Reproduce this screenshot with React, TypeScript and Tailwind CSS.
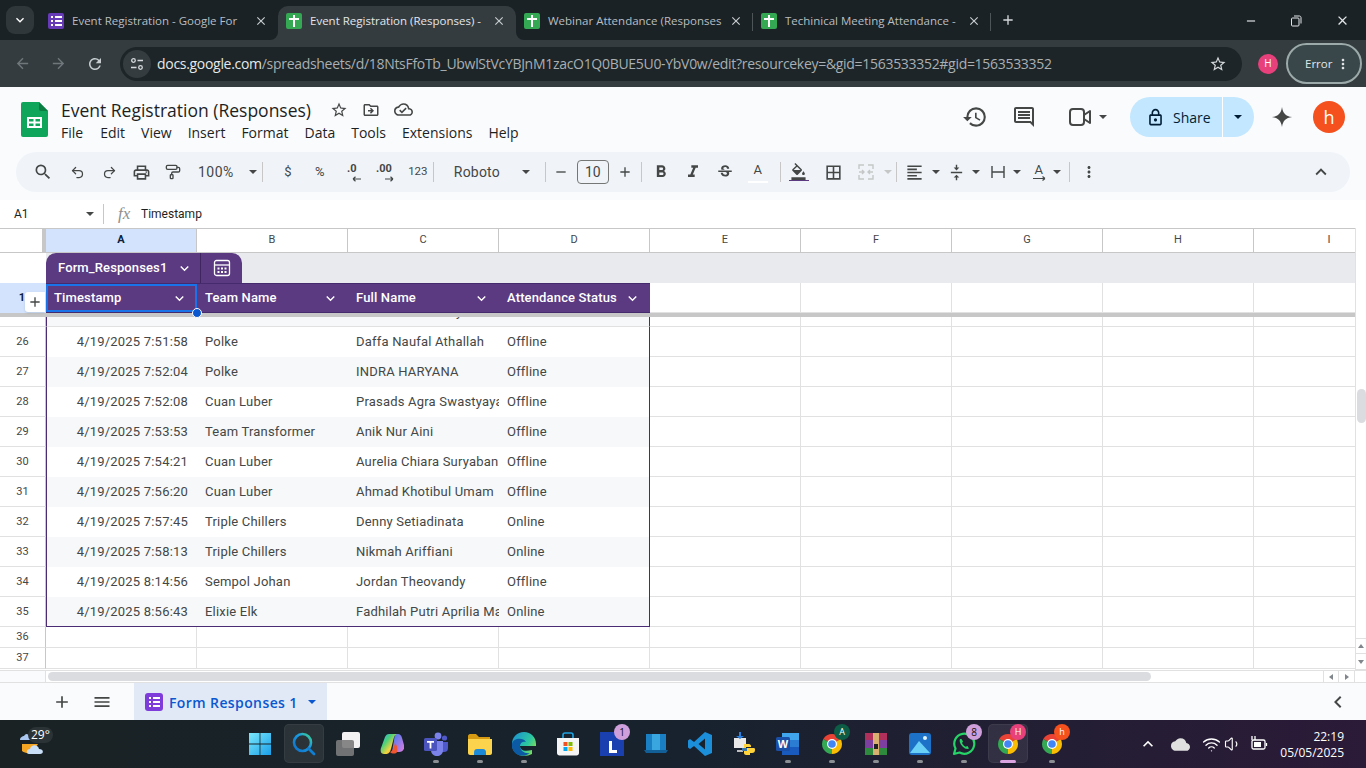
import type { ReactNode } from "react";
import { PaintRoller, Redo2, Undo2, Volume1, Wifi } from "lucide-react";
import {
  MdArrowBack,
  MdArrowForward,
  MdBorderAll,
  MdClose,
  MdExpandLess,
  MdExpandMore,
  MdFormatAlignLeft,
  MdFormatBold,
  MdFormatColorFill,
  MdFormatItalic,
  MdHistory,
  MdKeyboardArrowUp,
  MdMenu,
  MdMoreVert,
  MdOutlineCloudDone,
  MdOutlineDriveFileMove,
  MdOutlineInsertComment,
  MdOutlineLock,
  MdOutlinePrint,
  MdRefresh,
  MdSearch,
  MdStarBorder,
  MdStrikethroughS,
  MdAdd,
  MdRemove,
  MdVerticalAlignCenter,
  MdChevronLeft,
  MdCloud,
} from "react-icons/md";

const rows = [
  ["26", "4/19/2025 7:51:58", "Polke", "Daffa Naufal Athallah", "Offline"],
  ["27", "4/19/2025 7:52:04", "Polke", "INDRA HARYANA", "Offline"],
  ["28", "4/19/2025 7:52:08", "Cuan Luber", "Prasads Agra Swastyaya", "Offline"],
  ["29", "4/19/2025 7:53:53", "Team Transformer", "Anik Nur Aini", "Offline"],
  ["30", "4/19/2025 7:54:21", "Cuan Luber", "Aurelia Chiara Suryaban", "Offline"],
  ["31", "4/19/2025 7:56:20", "Cuan Luber", "Ahmad Khotibul Umam", "Offline"],
  ["32", "4/19/2025 7:57:45", "Triple Chillers", "Denny Setiadinata", "Online"],
  ["33", "4/19/2025 7:58:13", "Triple Chillers", "Nikmah Ariffiani", "Online"],
  ["34", "4/19/2025 8:14:56", "Sempol Johan", "Jordan Theovandy", "Offline"],
  ["35", "4/19/2025 8:56:43", "Elixie Elk", "Fadhilah Putri Aprilia Ma", "Online"],
];

const emptyCols = ["E", "F", "G", "H", "I"];

function SheetTabIcon() {
  return (
    <span className="relative block h-4 w-4 shrink-0 rounded-[2px] bg-[#34a853]">
      <span className="absolute left-[3px] top-[5px] h-[2px] w-[10px] bg-white" />
      <span className="absolute left-[7px] top-[2px] h-[12px] w-[2px] bg-white" />
    </span>
  );
}

function FormsIcon({ size, bg }: { size: string; bg: string }) {
  return (
    <span className={`flex shrink-0 flex-col items-center justify-center gap-[2px] ${size} ${bg}`}>
      {[0, 1, 2].map((i) => (
        <span key={i} className="flex items-center gap-[2px]">
          <span className="h-[2px] w-[2px] bg-white" />
          <span className="h-[2px] w-[7px] bg-white" />
        </span>
      ))}
    </span>
  );
}

function Tab({ icon, title, active, width, sep }: { icon: ReactNode; title: string; active?: boolean; width: string; sep?: boolean }) {
  return (
    <div className={`relative flex h-[34px] shrink-0 items-center pb-[6px] pl-2 pr-[10px] pt-[1px] ${width} ${active ? "rounded-t-[10px] bg-[#343c40] text-[#e3e6e8]" : "text-[#b9bec1]"}`}>
      {active && (
        <>
          <span className="absolute -left-2 bottom-0 h-2 w-2 bg-[#343c40]">
            <span className="block h-2 w-2 rounded-br-[8px] bg-[#1a2226]" />
          </span>
          <span className="absolute -right-2 bottom-0 h-2 w-2 bg-[#343c40]">
            <span className="block h-2 w-2 rounded-bl-[8px] bg-[#1a2226]" />
          </span>
        </>
      )}
      {icon}
      <span className="ml-2 min-w-0 flex-1 whitespace-nowrap text-[11.5px]">{title}</span>
      <MdClose className="ml-2 shrink-0 text-[#c8cdd0]" size={14} />
      {sep && <span className="absolute right-0 top-[7px] h-[18px] w-px bg-[#4d5558]" />}
    </div>
  );
}

function ChromeBar() {
  return (
    <div className="bg-[#1a2226] font-['Open_Sans',sans-serif]">
      <div className="flex h-10 items-end">
        <div className="mb-[6px] ml-[6px] mr-[6px] flex h-7 w-7 shrink-0 items-center justify-center rounded-[9px] bg-[#2f373a] text-white">
          <MdExpandMore size={16} />
        </div>
        <Tab icon={<FormsIcon size="h-4 w-4 rounded-[2px]" bg="bg-[#673ab7]" />} title="Event Registration - Google For" width="w-[238px]" />
        <Tab icon={<SheetTabIcon />} title="Event Registration (Responses) -" active width="w-[238px]" />
        <Tab icon={<SheetTabIcon />} title="Webinar Attendance (Responses" width="w-[237px]" sep />
        <Tab icon={<SheetTabIcon />} title="Techinical Meeting Attendance -" width="w-[238px]" sep />
        <MdAdd className="mb-[12px] ml-[9px] text-[#d5d9db]" size={16} />
        <div className="mb-3 ml-auto flex items-center text-[#e3e6e8]">
          <MdRemove className="mr-[32px]" size={14} />
          <svg width="12" height="12" viewBox="0 0 12 12" fill="none" stroke="#e3e6e8" className="mr-[33px]">
            <rect x="1.5" y="3" width="7.5" height="8" rx="1" />
            <path d="M4 1H9.5C10.3 1 11 1.7 11 2.5V8.5" />
          </svg>
          <MdClose className="mr-[16px]" size={15} />
        </div>
      </div>
      <div className="flex h-[47px] items-center bg-[#343c40] pl-[14px] pr-1">
        <MdArrowBack className="text-[#6f777b]" size={17} />
        <MdArrowForward className="ml-[19px] text-[#6f777b]" size={17} />
        <MdRefresh className="ml-[19px] text-[#c8cdd0]" size={18} />
        <div className="ml-[16px] flex h-[34px] w-[1122px] items-center rounded-full bg-[#1d2528] pl-[3px]">
          <span className="flex h-7 w-7 items-center justify-center rounded-full bg-[#343c40]">
            <svg width="14" height="14" viewBox="0 0 14 14" fill="none" stroke="#d5d9db" strokeWidth="1.3">
              <circle cx="3.5" cy="3.5" r="1.8" />
              <path d="M7.5 3.5H13M1 10.5H6.5" />
              <circle cx="10.5" cy="10.5" r="1.8" />
            </svg>
          </span>
          <span className="ml-[6px] whitespace-nowrap text-[14px] tracking-[-0.3px] text-[#a9afb2]">
            <span className="text-[#e6e9ea]">docs.google.com</span>/spreadsheets/d/18NtsFfoTb_UbwlStVcYBJnM1zacO1Q0BUE5U0-YbV0w/edit?resourcekey=&amp;gid=1563533352#gid=1563533352
          </span>
          <MdStarBorder className="ml-auto mr-[15px] text-[#d5d9db]" size={18} />
        </div>
        <span className="ml-4 flex h-5 w-5 items-center justify-center rounded-full bg-[#e8407a] text-[10px] text-white">H</span>
        <div className="ml-2 flex h-[41px] w-[76px] items-center rounded-full border-2 border-[#9caaa9] bg-[#39474a] pl-[17px] text-[11.5px] text-[#e3e6e8]">
          Error
          <MdMoreVert className="ml-[3px]" size={16} />
        </div>
      </div>
    </div>
  );
}

function SheetsLogo() {
  return (
    <svg width="27" height="35" viewBox="0 0 27 35" className="shrink-0">
      <path d="M2 0H18L27 9V33a2 2 0 0 1-2 2H2a2 2 0 0 1-2-2V2a2 2 0 0 1 2-2z" fill="#0fa55a" />
      <path d="M18 0L27 9H20a2 2 0 0 1-2-2z" fill="#0a7d43" />
      <path d="M6 15H21V26H6z M8 17V19.5H12.5V17z M14.5 17V19.5H19V17z M8 21.5V24H12.5V21.5z M14.5 21.5V24H19V21.5z" fill="#fff" fillRule="evenodd" />
    </svg>
  );
}

function AppHeader() {
  const menus = ["File", "Edit", "View", "Insert", "Format", "Data", "Tools", "Extensions", "Help"];
  return (
    <div className="flex h-[65px] items-center bg-[#f9fbfd] pl-[21px] font-['Open_Sans',sans-serif] text-[#1f1f1f]">
      <SheetsLogo />
      <div className="ml-[13px]">
        <div className="flex h-[24px] items-center pt-[1px]">
          <span className="whitespace-nowrap text-[17.5px] leading-6">Event Registration (Responses)</span>
          <MdStarBorder className="ml-[19px] text-[#444746]" size={18} />
          <MdOutlineDriveFileMove className="ml-[14px] text-[#444746]" size={18} />
          <MdOutlineCloudDone className="ml-[14px] text-[#444746]" size={19} />
        </div>
        <div className="mt-[1px] flex h-[20px] items-center gap-[16px] text-[14px]">
          {menus.map((m, i) => (
            <span key={m} className={i === 0 ? "mr-[1px]" : ""}>{m}</span>
          ))}
        </div>
      </div>
      <div className="ml-auto flex items-center pb-[5px] text-[#444746]">
        <MdHistory size={26} />
        <MdOutlineInsertComment className="ml-[24px]" size={24} />
        <svg width="22" height="20" viewBox="0 0 22 20" fill="none" stroke="#444746" strokeWidth="2" className="ml-[33px]">
          <rect x="1" y="2" width="14" height="16" rx="3" />
          <path d="M15 8L21 4V16L15 12" strokeLinejoin="round" />
        </svg>
        <span className="ml-[8px] h-0 w-0 border-x-[4px] border-t-[4px] border-x-transparent border-t-[#444746]" />
        <div className="ml-[23px] flex h-10 w-[124px] items-center rounded-full bg-[#c2e7ff] text-[#001d35]">
          <MdOutlineLock className="ml-[16px]" size={19} />
          <span className="ml-[8px] text-[14px] font-medium">Share</span>
          <span className="ml-[11px] h-10 w-px bg-white" />
          <span className="ml-[11px] h-0 w-0 border-x-[4px] border-t-[4px] border-x-transparent border-t-[#001d35]" />
        </div>
        <svg width="22" height="22" viewBox="0 0 24 24" className="ml-[17px]">
          <path d="M12 1C13 8 16 11 23 12C16 13 13 16 12 23C11 16 8 13 1 12C8 11 11 8 12 1Z" fill="#444746" />
        </svg>
        <span className="ml-[20px] mr-[21px] flex h-8 w-8 items-center justify-center rounded-full bg-[#f4511e] text-[18px] text-white">h</span>
      </div>
    </div>
  );
}

function Caret({ className = "" }: { className?: string }) {
  return <span className={`h-0 w-0 shrink-0 border-x-[4px] border-t-[4px] border-x-transparent border-t-[#444746] ${className}`} />;
}

function Sep({ ml, mr }: { ml: string; mr: string }) {
  return <span className={`h-[20px] w-px shrink-0 bg-[#c7c7c7] ${ml} ${mr}`} />;
}

function Tool({ children }: { children: ReactNode }) {
  return <span className="flex h-7 w-8 shrink-0 items-center justify-center text-[#444746]">{children}</span>;
}

function Toolbar() {
  return (
    <div className="bg-[#f9fbfd] pb-2 pl-4 pr-4 font-['Roboto',sans-serif] text-[#444746]">
      <div className="flex h-10 items-center rounded-full bg-[#f0f4f9] pl-[11px]">
        <Tool><MdSearch size={20} /></Tool>
        <span className="w-[2px]" />
        <Tool><Undo2 size={15} strokeWidth={2} /></Tool>
        <Tool><Redo2 size={15} strokeWidth={2} /></Tool>
        <Tool><MdOutlinePrint size={19} /></Tool>
        <Tool><PaintRoller size={16} strokeWidth={2} /></Tool>
        <span className="ml-[9px] text-[14px] tracking-[0.5px]">100%</span>
        <Caret className="ml-[15px]" />
        <Sep ml="ml-[5px]" mr="mr-[9px]" />
        <Tool><span className="text-[13px]">$</span></Tool>
        <Tool><span className="text-[13px]">%</span></Tool>
        <Tool>
          <span className="relative flex h-5 w-5 items-start justify-center text-[11px] font-bold leading-[14px]">
            .0
            <svg width="10" height="6" viewBox="0 0 10 6" className="absolute bottom-0 right-0"><path d="M1 3H9M1 3L3.5 .8M1 3L3.5 5.2" stroke="#444746" strokeWidth="1.2" fill="none" /></svg>
          </span>
        </Tool>
        <Tool>
          <span className="relative flex h-5 w-5 items-start justify-center text-[11px] font-bold leading-[14px]">
            .00
            <svg width="10" height="6" viewBox="0 0 10 6" className="absolute bottom-0 right-0"><path d="M1 3H9M9 3L6.5 .8M9 3L6.5 5.2" stroke="#444746" strokeWidth="1.2" fill="none" /></svg>
          </span>
        </Tool>
        <span className="ml-[2px]" />
        <Tool><span className="text-[11.5px]">123</span></Tool>
        <Sep ml="ml-[-1px]" mr="mr-[20px]" />
        <span className="w-[68px] text-[14px] tracking-[0.2px]">Roboto</span>
        <Caret />
        <Sep ml="ml-[15px]" mr="mr-[7px]" />
        <MdRemove size={16} />
        <span className="ml-[8px] flex h-6 w-[32px] items-center justify-center rounded-[4px] border border-[#747775] text-[14px]">10</span>
        <MdAdd className="ml-[8px]" size={16} />
        <Sep ml="ml-[8px]" mr="mr-[3px]" />
        <Tool><MdFormatBold size={20} /></Tool>
        <Tool><MdFormatItalic size={20} /></Tool>
        <Tool><MdStrikethroughS size={18} /></Tool>
        <span className="ml-[1px]" />
        <Tool>
          <span className="flex flex-col items-center">
            <span className="text-[13px] leading-[16px]">A</span>
            <span className="mt-[3px] h-[2px] w-5 bg-white" />
          </span>
        </Tool>
        <Sep ml="ml-[6px]" mr="mr-[2px]" />
        <Tool>
          <span className="flex flex-col items-center">
            <MdFormatColorFill size={17} />
            <span className="h-[1.5px] w-5 bg-[#5b3a82]" />
          </span>
        </Tool>
        <span className="w-[3px]" />
        <Tool><MdBorderAll size={19} /></Tool>
        <Tool>
          <svg width="16" height="16" viewBox="0 0 16 16" fill="none" stroke="#c4c7c5" strokeWidth="1.4">
            <path d="M1 5V1H6M10 1H15V5M1 11V15H6M10 15H15V11M1 8H5.5M4 6L6 8L4 10M15 8H10.5M12 6L10 8L12 10" />
          </svg>
        </Tool>
        <span className="ml-[2px] h-0 w-0 border-x-[4px] border-t-[4px] border-x-transparent border-t-[#c4c7c5]" />
        <Sep ml="ml-[4px]" mr="mr-[2px]" />
        <Tool><MdFormatAlignLeft size={19} /></Tool>
        <Caret className="ml-[1px]" />
        <span className="ml-[1px]" />
        <Tool><MdVerticalAlignCenter size={17} /></Tool>
        <Caret className="ml-[-1px]" />
        <span className="ml-[3px]" />
        <Tool>
          <svg width="16" height="14" viewBox="0 0 16 14" fill="none" stroke="#444746" strokeWidth="1.4"><path d="M1 1V13M13 1V13M1 7H13" /></svg>
        </Tool>
        <Caret className="ml-[-2px]" />
        <span className="ml-[2px]" />
        <Tool>
          <span className="flex flex-col items-center">
            <span className="text-[13px] leading-[13px]">A</span>
            <svg width="14" height="5" viewBox="0 0 14 5" fill="none" stroke="#444746" strokeWidth="1.2"><path d="M1 2.5H13M13 2.5L10.5 .5M13 2.5L10.5 4.5" /></svg>
          </span>
        </Tool>
        <Caret className="ml-[-2px]" />
        <Sep ml="ml-[8px]" mr="mr-[3px]" />
        <Tool><MdMoreVert size={18} /></Tool>
        <MdExpandLess className="ml-auto mr-[18px]" size={22} />
      </div>
    </div>
  );
}

function FormulaBar() {
  return (
    <div className="flex h-[28px] items-center bg-white pl-[14px] font-['Roboto',sans-serif] text-[12px] text-[#1f1f1f]">
      <span className="w-[72px]">A1</span>
      <Caret />
      <span className="ml-[9px] h-[20px] w-px bg-[#c7c7c7]" />
      <span className="ml-[14px] w-[16px] font-['Liberation_Serif',serif] text-[17px] italic text-[#8f8f8f]">fx</span>
      <span className="ml-[7px]">Timestamp</span>
    </div>
  );
}

function ColHeaders() {
  const letters = ["A", "B", "C", "D", "E", "F", "G", "H", "I"];
  return (
    <div className="flex h-[25px] border-y border-[#c7c7c7] bg-white text-[11px] text-[#444746]">
      <span className="w-[46px] shrink-0 border-r-[4px] border-[#c7c7c7]" />
      {letters.map((l, i) => (
        <span
          key={l}
          className={`flex w-[151px] shrink-0 items-center justify-center border-r border-[#c7c7c7] ${i === 0 ? "bg-[#d3e3fd] font-bold text-[#0b1f3f]" : ""}`}
        >
          {l}
        </span>
      ))}
    </div>
  );
}

function TableTabRow() {
  return (
    <div className="flex h-[30px] bg-[#e8eaed]">
      <span className="w-[46px] shrink-0 bg-white" />
      <div className="flex w-[196px] items-center rounded-t-[10px] bg-[#5b3a82] text-white">
        <span className="ml-3 w-[113px] whitespace-nowrap text-[13px] font-medium tracking-[0.12px]">Form_Responses1</span>
        <MdExpandMore className="ml-[5px]" size={17} />
        <span className="ml-[7px] h-full w-px bg-[#3e2560]" />
        <svg width="18" height="18" viewBox="0 0 18 18" fill="none" stroke="#fff" strokeWidth="1.3" className="ml-[12px]">
          <rect x="1.5" y="1.5" width="15" height="15" rx="2" />
          <path d="M1.5 6H16.5" />
          <path d="M4.5 9.5H6.5M8 9.5H10M11.5 9.5H13.5M4.5 13H6.5M8 13H10M11.5 13H13.5" strokeWidth="2" />
        </svg>
      </div>
    </div>
  );
}

function HeaderRow() {
  const names = ["Timestamp", "Team Name", "Full Name", "Attendance Status"];
  return (
    <div className="relative flex h-[30px] bg-white">
      <span className="flex w-[46px] shrink-0 items-center justify-end bg-[#d3e3fd] pr-[21px] text-[11px] font-bold text-[#0b1f3f]">1</span>
      <div className="flex w-[604px] shrink-0 border-y border-[#452a6e] bg-[#5b3a82]">
        {names.map((n, i) => (
          <div key={n} className={`flex w-[151px] items-center pl-2 pr-[9px] text-[13px] font-medium tracking-[0.15px] text-white ${i === 0 ? "outline-2 -outline-offset-2 outline-[#1a73e8]" : ""}`}>
            <span className="flex-1 whitespace-nowrap">{n}</span>
            <MdExpandMore size={17} />
          </div>
        ))}
      </div>
      {emptyCols.map((c) => (
        <span key={c} className="w-[151px] shrink-0 border-r border-b border-[#e1e1e1]" />
      ))}
      <span className="absolute left-[25px] top-[9px] flex h-5 w-5 items-center justify-center rounded-l-[3px] bg-white text-[#444746] shadow-sm">
        <MdAdd size={16} />
      </span>
      <span className="absolute left-[192px] top-[25px] z-10 h-[10px] w-[10px] rounded-full border border-white bg-[#0b57d0]" />
    </div>
  );
}

function DataRow({ row, index }: { row: string[]; index: number }) {
  const striped = index % 2 === 1;
  const last = index === rows.length - 1;
  return (
    <div className="flex h-[30px] text-[13px] tracking-[0.2px] text-[#444746]">
      <span className="flex w-[46px] shrink-0 items-center justify-center border-r border-b border-r-[#c7c7c7] border-b-[#e1e1e1] pt-[1px] text-[11px] tracking-normal">{row[0]}</span>
      <div className={`flex w-[604px] shrink-0 border-x border-[#4a2c75] ${last ? "border-b border-b-[#4a2c75]" : ""} ${striped ? "bg-[#f6f8f9]" : "bg-white"}`}>
        <span className="flex w-[150px] items-center justify-end whitespace-nowrap pr-[9px]">{row[1]}</span>
        <span className="flex w-[151px] items-center whitespace-nowrap pl-2">{row[2]}</span>
        <span className="flex w-[151px] items-center overflow-hidden whitespace-nowrap pl-2"><span className="block w-[143px] overflow-hidden">{row[3]}</span></span>
        <span className="flex w-[150px] items-center whitespace-nowrap pl-2">{row[4]}</span>
      </div>
      {emptyCols.map((c) => (
        <span key={c} className="w-[151px] shrink-0 border-r border-b border-[#e1e1e1]" />
      ))}
    </div>
  );
}

function EmptyRow({ num, height }: { num: string; height: string }) {
  return (
    <div className={`flex ${height} text-[11px] text-[#444746]`}>
      <span className="flex w-[46px] shrink-0 items-center justify-center border-r border-b border-r-[#c7c7c7] border-b-[#e1e1e1]">{num}</span>
      {["A", "B", "C", "D", ...emptyCols].map((c) => (
        <span key={c} className="w-[151px] shrink-0 border-r border-b border-[#e1e1e1]" />
      ))}
    </div>
  );
}

function PartialRow() {
  return (
    <div className="flex h-[10px] overflow-hidden text-[13px] tracking-[0.2px] text-[#444746]">
      <span className="w-[46px] shrink-0 border-r border-b border-r-[#c7c7c7] border-b-[#e1e1e1]" />
      <div className="w-[604px] shrink-0 border-x border-b border-x-[#4a2c75] border-b-[#e1e1e1] bg-[#f6f8f9]">
        <span className="-mt-[15px] ml-[309px] block whitespace-nowrap leading-[19px]">Muhammad Rizky</span>
      </div>
      {emptyCols.map((c) => (
        <span key={c} className="w-[151px] shrink-0 border-r border-b border-[#e1e1e1]" />
      ))}
    </div>
  );
}

function Grid() {
  return (
    <div className="flex h-[455px] flex-col bg-white font-['Roboto',sans-serif]">
      <div className="flex h-[442px] overflow-hidden">
        <div className="w-[1355px] shrink-0 overflow-hidden">
          <ColHeaders />
          <TableTabRow />
          <HeaderRow />
          <div className="h-1 bg-[#c7c7c7]" />
          <PartialRow />
          {rows.map((r, i) => (
            <DataRow key={r[0]} row={r} index={i} />
          ))}
          <EmptyRow num="36" height="h-[21px]" />
          <EmptyRow num="37" height="h-[21px]" />
        </div>
        <div className="flex w-[11px] shrink-0 flex-col border-l border-[#e1e1e1] bg-white">
          <span className="ml-[1px] mt-[161px] h-[34px] w-[9px] rounded-full bg-[#dadce0]" />
          <span className="mt-auto flex h-4 items-center justify-center border-y border-[#e1e1e1] text-[#80868b]">
            <span className="h-0 w-0 border-x-[3px] border-b-[4px] border-x-transparent border-b-[#80868b]" />
          </span>
          <span className="flex h-4 items-center justify-center border-b border-[#e1e1e1]">
            <span className="h-0 w-0 border-x-[3px] border-t-[4px] border-x-transparent border-t-[#80868b]" />
          </span>
        </div>
      </div>
      <div className="flex h-[13px] items-center border-y border-[#e1e1e1] bg-white">
        <span className="h-full w-[46px] shrink-0 border-r border-[#e1e1e1] bg-[#f9fbfd]" />
        <span className="ml-[2px] h-[9px] w-[1103px] rounded-full bg-[#dadce0]" />
        <span className="ml-auto flex h-full w-4 items-center justify-center border-x border-[#e1e1e1]">
          <span className="h-0 w-0 border-y-[3px] border-r-[4px] border-y-transparent border-r-[#80868b]" />
        </span>
        <span className="flex h-full w-4 items-center justify-center border-r border-[#e1e1e1]">
          <span className="h-0 w-0 border-y-[3px] border-l-[4px] border-y-transparent border-l-[#80868b]" />
        </span>
        <span className="w-[11px]" />
      </div>
    </div>
  );
}

function SheetBar() {
  return (
    <div className="flex h-[37px] items-center bg-[#f9fbfd] font-['Open_Sans',sans-serif] text-[#444746]">
      <MdAdd className="ml-[52px]" size={20} />
      <MdMenu className="ml-[20px]" size={20} />
      <div className="ml-[22px] flex h-full w-[193px] items-center bg-[#e1e9f7] pl-[11px] pt-[1px] text-[#0b57d0]">
        <FormsIcon size="h-[18px] w-[18px] rounded-[3px]" bg="bg-[#7e3ddb]" />
        <span className="ml-[6px] whitespace-nowrap text-[14px] font-semibold tracking-[0.4px]">Form Responses 1</span>
        <span className="ml-[10px] h-0 w-0 border-x-[4px] border-t-[4px] border-x-transparent border-t-[#0b57d0]" />
      </div>
      <MdChevronLeft className="ml-auto mr-[16px]" size={24} />
    </div>
  );
}

function Chrome({ badge, badgeColor }: { badge: string; badgeColor: string }) {
  return (
    <span className="relative block h-6 w-6">
      <svg width="24" height="24" viewBox="0 0 24 24">
        <path d="M12 12L3.34 7A10 10 0 0 1 20.66 7Z" fill="#ea4335" />
        <path d="M12 12L20.66 7A10 10 0 0 1 12 22Z" fill="#fbbc04" />
        <path d="M12 12L12 22A10 10 0 0 1 3.34 7Z" fill="#34a853" />
        <circle cx="12" cy="12" r="5" fill="#fff" />
        <circle cx="12" cy="12" r="3.8" fill="#4285f4" />
      </svg>
      <span className={`absolute -right-[6px] -top-[8px] flex h-4 w-4 items-center justify-center rounded-full text-[9px] text-white ${badgeColor}`}>{badge}</span>
    </span>
  );
}

function NumBadge({ n }: { n: string }) {
  return <span className="absolute -right-[6px] -top-[8px] flex h-4 w-4 items-center justify-center rounded-full bg-[#cf9fdc] text-[10px] text-[#111]">{n}</span>;
}

const taskIcons: { key: string; dot?: boolean; active?: boolean; search?: boolean; icon: ReactNode }[] = [
  {
    key: "start",
    icon: (
      <svg width="24" height="24" viewBox="0 0 24 24">
        <defs>
          <linearGradient id="win" x1="0" y1="0" x2="1" y2="1">
            <stop offset="0" stopColor="#7be8fb" />
            <stop offset="1" stopColor="#1a9fe8" />
          </linearGradient>
        </defs>
        <path d="M1 1H11.6V11.6H1zM12.4 1H23V11.6H12.4zM1 12.4H11.6V23H1zM12.4 12.4H23V23H12.4z" fill="url(#win)" />
      </svg>
    ),
  },
  {
    key: "search",
    search: true,
    icon: (
      <svg width="24" height="24" viewBox="0 0 24 24" fill="none">
        <defs>
          <linearGradient id="sr" x1="0" y1="1" x2="1" y2="0">
            <stop offset="0" stopColor="#0d6fc9" />
            <stop offset="0.6" stopColor="#1a9be0" />
            <stop offset="1" stopColor="#3fd48a" />
          </linearGradient>
        </defs>
        <circle cx="10.5" cy="10.5" r="8.5" stroke="url(#sr)" strokeWidth="2.6" />
        <path d="M16.5 16.5L22 22" stroke="#0f7fd3" strokeWidth="2.8" strokeLinecap="round" />
      </svg>
    ),
  },
  {
    key: "view",
    icon: (
      <span className="relative block h-6 w-6">
        <span className="absolute right-0 top-0 h-4 w-[18px] rounded-[2px] bg-[#f2f2f2]" />
        <span className="absolute bottom-0 left-0 h-4 w-[18px] rounded-[2px] bg-[#7b7b7b]/90" />
      </span>
    ),
  },
  {
    key: "copilot",
    icon: (
      <svg width="24" height="24" viewBox="0 0 24 24">
        <defs>
          <linearGradient id="cp1" x1="0" y1="0" x2="1" y2="1">
            <stop offset="0" stopColor="#2bb5f0" />
            <stop offset="0.35" stopColor="#4ccf7a" />
            <stop offset="0.65" stopColor="#f5d33d" />
            <stop offset="1" stopColor="#f0562f" />
          </linearGradient>
          <linearGradient id="cp2" x1="0" y1="0" x2="1" y2="1">
            <stop offset="0" stopColor="#3a7bf0" />
            <stop offset="1" stopColor="#e07be0" />
          </linearGradient>
        </defs>
        <path d="M18 2C20 2 21 3 22 6L24 13C25 18 22 20 19 20H12L15 2Z" fill="url(#cp2)" />
        <path d="M9 2H17C14 3 14 6 13 9L11 17C10 21 8 22 6 22H4C1 22 0 19 1 16L5 5C6 3 7 2 9 2Z" fill="url(#cp1)" />
        <path d="M10 20C13 19 14 15 15 11C17 13 18 17 17 20C16 22 12 22 10 20Z" fill="#f0562f" />
      </svg>
    ),
  },
  {
    key: "teams",
    dot: true,
    icon: (
      <svg width="24" height="24" viewBox="0 0 24 24">
        <circle cx="14" cy="4" r="3.4" fill="#7b83eb" />
        <circle cx="20.5" cy="6" r="2.6" fill="#5059c9" />
        <path d="M16 10H24V16C24 19 22 20 20 20H16z" fill="#5059c9" />
        <path d="M7 9H19V18C19 22 16 24 13 24C10 24 7 22 7 18z" fill="#7b83eb" />
        <rect x="0" y="6" width="13" height="13" rx="1.5" fill="#4b53bc" />
        <path d="M3 9H10V10.8H7.4V16.5H5.6V10.8H3z" fill="#fff" />
      </svg>
    ),
  },
  {
    key: "explorer",
    dot: true,
    icon: (
      <svg width="24" height="24" viewBox="0 0 24 24">
        <path d="M0 4C0 3 1 2 2 2H8L11 5H22V9H0z" fill="#d69a12" />
        <path d="M0 7H24V21C24 22 23 23 22 23H2C1 23 0 22 0 21z" fill="#fcd34d" />
        <path d="M6 21C6 18 7 17 9 17H15C17 17 18 18 18 21V23H6z" fill="#1c8ad6" />
      </svg>
    ),
  },
  {
    key: "edge",
    dot: true,
    icon: (
      <svg width="24" height="24" viewBox="0 0 24 24">
        <defs>
          <linearGradient id="ed" x1="0" y1="0" x2="1" y2="0.6">
            <stop offset="0" stopColor="#1a8fd6" />
            <stop offset="0.7" stopColor="#2cc7a0" />
            <stop offset="1" stopColor="#7ddb5c" />
          </linearGradient>
        </defs>
        <path d="M12 0C19 0 24 5 24 12V14H8C8 18 12 20 20 18V22C12 26 0 24 0 12C0 5 5 0 12 0Z" fill="url(#ed)" />
        <path d="M0 12C1 6 11 5 14 10C12 9 8 10 8 14C8 19 13 22 18 21C10 27 -1 22 0 12Z" fill="#0c59a4" />
      </svg>
    ),
  },
  {
    key: "store",
    icon: (
      <svg width="24" height="24" viewBox="0 0 24 24">
        <path d="M7 6V3C7 1.5 8 1 9 1H15C16 1 17 1.5 17 3V6" fill="none" stroke="#1fa3e0" strokeWidth="1.6" />
        <path d="M1 6H23V21C23 22.5 22 23.5 20.5 23.5H3.5C2 23.5 1 22.5 1 21z" fill="#f4f4f4" />
        <path d="M7.5 10H11.5V14H7.5z" fill="#f25022" />
        <path d="M12.5 10H16.5V14H12.5z" fill="#7fba00" />
        <path d="M7.5 15H11.5V19H7.5z" fill="#00a4ef" />
        <path d="M12.5 15H16.5V19H12.5z" fill="#ffb900" />
      </svg>
    ),
  },
  {
    key: "lark",
    icon: (
      <span className="relative block h-6 w-6 bg-[#1a3fae]">
        <span className="absolute left-[9px] top-[9px] h-[12px] w-[3px] bg-white" />
        <span className="absolute left-[9px] top-[18px] h-[3px] w-[8px] bg-white" />
        <NumBadge n="1" />
      </span>
    ),
  },
  {
    key: "laptop",
    icon: (
      <svg width="24" height="24" viewBox="0 0 24 24">
        <path d="M2 2H22V18H2z" fill="#1b7fc4" />
        <path d="M8 2H16V18H8z" fill="#3aa6e0" />
        <path d="M0 18H24L22 21H2z" fill="#125e96" />
      </svg>
    ),
  },
  {
    key: "vscode",
    icon: (
      <svg width="24" height="24" viewBox="0 0 24 24">
        <path d="M17 0L24 3V21L17 24L6 14L2 17L0 15.5V8.5L2 7L6 10zM17 6.5L10.5 12L17 17.5z" fill="#1c8fdb" fillRule="evenodd" />
      </svg>
    ),
  },
  {
    key: "python",
    icon: (
      <svg width="24" height="24" viewBox="0 0 24 24">
        <path d="M2 6H14V16H2z" fill="#e8e8e8" />
        <path d="M5 18H11V20H5z" fill="#bdbdbd" />
        <path d="M7 0H9V4H12L8 7L4 4H7z" fill="#2a7fe0" />
        <path d="M12 12H17C18 12 19 13 19 14V15H14V16H22C23 16 23 17 23 18C23 20 22 21 20 21H18V23H14C13 23 12 22 12 21z" fill="#ffd43b" />
        <path d="M10 16H15V19H11C10 19 10 18 10 17z" fill="#3776ab" />
      </svg>
    ),
  },
  {
    key: "word",
    dot: true,
    icon: (
      <svg width="24" height="24" viewBox="0 0 24 24">
        <path d="M6 1H23V23H6z" fill="#2b7cd3" />
        <path d="M6 1H23V8H6z" fill="#41a5ee" />
        <path d="M6 15H23V23H6z" fill="#185abd" />
        <rect x="0" y="5" width="14" height="14" rx="1.5" fill="#1a4fa8" />
        <text x="7" y="16" textAnchor="middle" fontSize="11" fontWeight="700" fill="#fff" fontFamily="Liberation Sans">W</text>
      </svg>
    ),
  },
  { key: "chrome-a", dot: true, icon: <Chrome badge="A" badgeColor="bg-[#0d5c45]" /> },
  {
    key: "rar",
    dot: true,
    icon: (
      <svg width="24" height="24" viewBox="0 0 24 24">
        <path d="M1 1H23V8H1z" fill="#b0305c" />
        <path d="M1 8H23V16H1z" fill="#7d3fa0" />
        <path d="M1 16H23V23H1z" fill="#2e8b3d" />
        <path d="M9 1H15V23H9z" fill="#d8b070" />
        <path d="M10 12H14V17H10z" fill="#222" />
      </svg>
    ),
  },
  {
    key: "photos",
    dot: true,
    icon: (
      <svg width="24" height="24" viewBox="0 0 24 24">
        <rect x="1" y="1" width="22" height="22" rx="3" fill="#1d72c8" />
        <path d="M2 21L11 9L22 21z" fill="#6ad0f5" />
        <circle cx="17" cy="6" r="2" fill="#dff4ff" />
      </svg>
    ),
  },
  {
    key: "wa",
    dot: true,
    icon: (
      <span className="relative block h-6 w-6">
        <svg width="24" height="24" viewBox="0 0 24 24" fill="none">
          <path d="M2 22L3.5 16.5A10 10 0 1 1 7.5 20.5z" stroke="#25d366" strokeWidth="2.2" strokeLinejoin="round" />
          <path d="M8 7C7 9 8 12 10.5 14.5C13 17 15.5 17.5 17 16.5L15.5 14L13.5 14.7C12 14 11 13 10 11L11 9.5L9.5 7z" fill="#25d366" />
        </svg>
        <NumBadge n="8" />
      </span>
    ),
  },
  { key: "chrome-h", active: true, icon: <Chrome badge="H" badgeColor="bg-[#e8407a]" /> },
  { key: "chrome-o", dot: true, icon: <Chrome badge="h" badgeColor="bg-[#f4511e]" /> },
];

function Taskbar() {
  return (
    <div className="flex h-12 items-center bg-linear-to-r from-[#1a2224] via-[#17222e] to-[#2b1a38] font-['Open_Sans',sans-serif] text-white">
      <div className="relative h-full w-[238px] shrink-0">
        <svg width="26" height="24" viewBox="0 0 26 24" className="absolute left-[20px] top-[12px]">
          <path d="M0 8C0 5 3 4 4 4C6 0 10 2 11 8H1z" fill="#a9c7f0" />
          <path d="M2 12H18L14 18C11 22 6 22 2 19z" fill="#f5a623" />
          <path d="M9 22C6 22 6 17 10 17C11 12 18 12 19 17C24 17 24 22 20 22z" fill="#c9def7" />
        </svg>
        <span className="absolute left-[28px] top-[7px] rounded-full bg-[#2c3336] px-[3px] text-[12px] leading-[16px]">29°</span>
      </div>
      <div className="flex h-full">
        {taskIcons.map((t) => (
          <div key={t.key} className="relative flex h-full w-11 items-center justify-center">
            {(t.search || t.active) && <span className="absolute left-[2px] top-[4px] h-[39px] w-10 rounded-[5px] border border-white/5 bg-white/8" />}
            <span className="relative">{t.icon}</span>
            {t.dot && <span className="absolute bottom-[5px] left-[19px] h-[3px] w-[6px] rounded-full bg-[#8b8f93]" />}
            {t.active && <span className="absolute bottom-[5px] left-[14px] h-[3px] w-4 rounded-full bg-[#dba4e0]" />}
          </div>
        ))}
      </div>
      <div className="ml-[64px] flex items-center">
        <MdKeyboardArrowUp size={20} />
        <MdCloud className="ml-[13px] text-[#e0e0e0]" size={19} />
        <Wifi className="ml-[12px]" size={19} strokeWidth={1.7} />
        <Volume1 className="ml-[3px]" size={18} strokeWidth={1.5} />
        <svg width="20" height="18" viewBox="0 0 20 18" fill="none" stroke="#fff" strokeWidth="1.3" className="ml-[7px]">
          <rect x="3" y="5" width="13" height="9" rx="1.5" />
          <path d="M17.5 8V11" />
          <path d="M5 7H12V12H5z" fill="#fff" stroke="none" />
          <path d="M3 1V5M6 1V5" />
        </svg>
      </div>
      <div className="ml-auto mr-[22px] pt-[1px] text-right text-[12px] leading-[16px]">
        <div>22:19</div>
        <div>05/05/2025</div>
      </div>
    </div>
  );
}

export default function App() {
  return (
    <div className="h-[768px] w-[1366px] overflow-hidden">
      <ChromeBar />
      <AppHeader />
      <Toolbar />
      <FormulaBar />
      <Grid />
      <SheetBar />
      <Taskbar />
    </div>
  );
}
